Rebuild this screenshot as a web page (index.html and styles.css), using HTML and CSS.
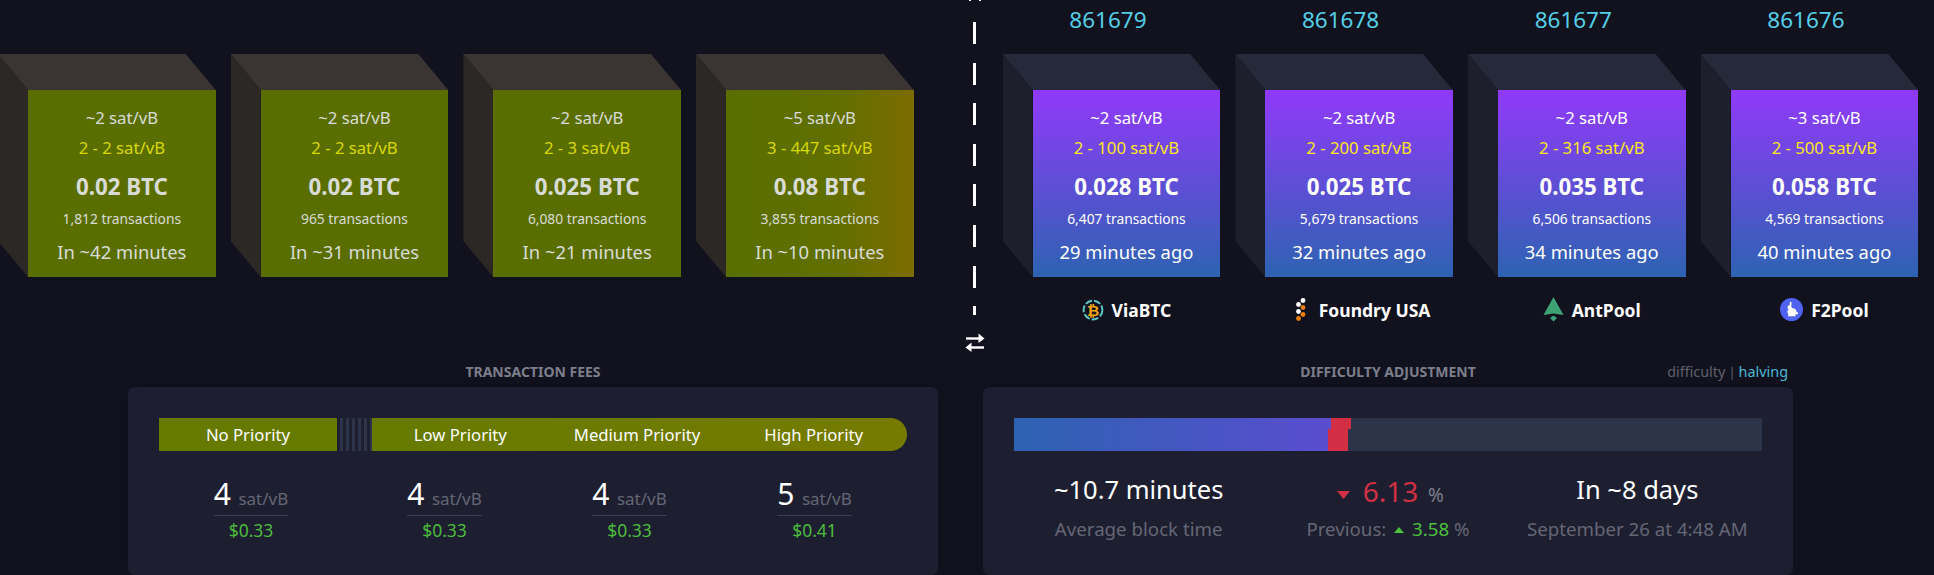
FILE: index.html
```html
<!DOCTYPE html>
<html lang="en">
<head>
  <meta charset="UTF-8" />
  <title>Mempool</title>
  <link rel="stylesheet" href="styles.css">
</head>
<body>
  <div class="chain">
    <div class="blocks">
      <div class="block pending">
        <div class="block-number"></div>
        <div class="face">
          <div class="median">~2 sat/vB</div>
          <div class="range">2 - 2 sat/vB</div>
          <div class="total">0.02 BTC</div>
          <div class="count">1,812 transactions</div>
          <div class="time">In ~42 minutes</div>
        </div>
      </div>
      <div class="block pending">
        <div class="block-number"></div>
        <div class="face">
          <div class="median">~2 sat/vB</div>
          <div class="range">2 - 2 sat/vB</div>
          <div class="total">0.02 BTC</div>
          <div class="count">965 transactions</div>
          <div class="time">In ~31 minutes</div>
        </div>
      </div>
      <div class="block pending">
        <div class="block-number"></div>
        <div class="face">
          <div class="median">~2 sat/vB</div>
          <div class="range">2 - 3 sat/vB</div>
          <div class="total">0.025 BTC</div>
          <div class="count">6,080 transactions</div>
          <div class="time">In ~21 minutes</div>
        </div>
      </div>
      <div class="block pending">
        <div class="block-number"></div>
        <div class="face face-next">
          <div class="median">~5 sat/vB</div>
          <div class="range">3 - 447 sat/vB</div>
          <div class="total">0.08 BTC</div>
          <div class="count">3,855 transactions</div>
          <div class="time">In ~10 minutes</div>
        </div>
      </div>
    </div>

    <div class="divider">
      <div class="divider-tip"></div>
      <div class="dashes"></div>
      <svg class="swap" width="20" height="19" viewBox="0 0 20 19">
        <path d="M1 5.5H16" stroke="#fff" stroke-width="2.4" fill="none"/>
        <path d="M13.5 0.5L19.5 5.5L13.5 10Z" fill="#fff"/>
        <path d="M19 14.5H4" stroke="#fff" stroke-width="2.4" fill="none"/>
        <path d="M6.5 9.5L0.5 14.5L6.5 19Z" fill="#fff"/>
      </svg>
    </div>

    <div class="blocks">
      <div class="block mined">
        <div class="block-number">861679</div>
        <div class="face">
          <div class="median">~2 sat/vB</div>
          <div class="range">2 - 100 sat/vB</div>
          <div class="total">0.028 BTC</div>
          <div class="count">6,407 transactions</div>
          <div class="time">29 minutes ago</div>
        </div>
        <div class="pool">
          <svg width="22" height="24" viewBox="0 0 22 24">
            <circle cx="11" cy="12" r="9.4" fill="none" stroke="#5cc4c4" stroke-width="2" stroke-dasharray="7 2"/>
            <text class="btc-glyph" x="11" y="17.5" text-anchor="middle">₿</text>
          </svg>
          <span>ViaBTC</span>
        </div>
      </div>
      <div class="block mined">
        <div class="block-number">861678</div>
        <div class="face">
          <div class="median">~2 sat/vB</div>
          <div class="range">2 - 200 sat/vB</div>
          <div class="total">0.025 BTC</div>
          <div class="count">5,679 transactions</div>
          <div class="time">32 minutes ago</div>
        </div>
        <div class="pool">
          <svg class="foundry-mark" width="16" height="24" viewBox="0 0 16 24">
            <circle cx="8" cy="2.5" r="2.4" fill="#fff"/>
            <circle cx="3.5" cy="6.5" r="2.4" fill="#fff"/>
            <circle cx="8" cy="9.5" r="2.4" fill="#f07c00"/>
            <circle cx="3.5" cy="13.5" r="2.4" fill="#fff"/>
            <circle cx="8" cy="16.5" r="2.4" fill="#f07c00"/>
            <circle cx="3.5" cy="20.5" r="2.4" fill="#f07c00"/>
          </svg>
          <span>Foundry USA</span>
        </div>
      </div>
      <div class="block mined">
        <div class="block-number">861677</div>
        <div class="face">
          <div class="median">~2 sat/vB</div>
          <div class="range">2 - 316 sat/vB</div>
          <div class="total">0.035 BTC</div>
          <div class="count">6,506 transactions</div>
          <div class="time">34 minutes ago</div>
        </div>
        <div class="pool">
          <svg width="21" height="25" viewBox="0 0 21 25">
            <path d="M10.5 0L20.5 18L10.5 16.5L0.5 18Z" fill="#3fa274"/>
            <path d="M10.5 18.5L14 21L10.5 24.5L7 21Z" fill="#3fa274"/>
          </svg>
          <span>AntPool</span>
        </div>
      </div>
      <div class="block mined">
        <div class="block-number">861676</div>
        <div class="face">
          <div class="median">~3 sat/vB</div>
          <div class="range">2 - 500 sat/vB</div>
          <div class="total">0.058 BTC</div>
          <div class="count">4,569 transactions</div>
          <div class="time">40 minutes ago</div>
        </div>
        <div class="pool">
          <svg width="23" height="23" viewBox="0 0 23 23">
            <circle cx="11.5" cy="11.5" r="11.5" fill="#4f63f0"/>
            <path d="M10 3.5L11.6 4.6L11.2 8L9.6 8Z" fill="#fff"/>
            <circle cx="9.6" cy="9.4" r="2.1" fill="#fff"/>
            <ellipse cx="12" cy="14" rx="4.6" ry="3.9" fill="#fff"/>
            <circle cx="16.8" cy="15.2" r="1.2" fill="#fff"/>
            <path d="M8 16.5H15.5V18.3H8Z" fill="#fff"/>
          </svg>
          <span>F2Pool</span>
        </div>
      </div>
    </div>
  </div>

  <div class="stats">
    <section>
      <div class="stats-head">
        <h5>TRANSACTION FEES</h5>
      </div>
      <div class="card">
        <div class="fee-bar">
          <div class="fee-none">No Priority</div>
          <div class="fee-stripes"></div>
          <div class="fee-levels">
            <div>Low Priority</div>
            <div>Medium Priority</div>
            <div>High Priority</div>
          </div>
        </div>
        <div class="fee-values">
          <div class="fee-item">
            <div class="fee-rate"><b>4</b> <span>sat/vB</span></div>
            <div class="fee-usd">$0.33</div>
          </div>
          <div class="fee-item">
            <div class="fee-rate"><b>4</b> <span>sat/vB</span></div>
            <div class="fee-usd">$0.33</div>
          </div>
          <div class="fee-item">
            <div class="fee-rate"><b>4</b> <span>sat/vB</span></div>
            <div class="fee-usd">$0.33</div>
          </div>
          <div class="fee-item">
            <div class="fee-rate"><b>5</b> <span>sat/vB</span></div>
            <div class="fee-usd">$0.41</div>
          </div>
        </div>
      </div>
    </section>

    <section>
      <div class="stats-head">
        <h5>DIFFICULTY ADJUSTMENT</h5>
        <div class="switch">difficulty<i>|</i><a>halving</a></div>
      </div>
      <div class="card">
        <div class="diff-bar">
          <div class="diff-fill"></div>
          <div class="diff-change"></div>
        </div>
        <div class="diff-values">
          <div class="diff-item">
            <div class="diff-main">~10.7 minutes</div>
            <div class="diff-sub">Average block time</div>
          </div>
          <div class="diff-item">
            <div class="diff-main diff-pct">
              <svg width="13" height="8" viewBox="0 0 13 8"><path d="M0 0H13L6.5 8Z" fill="#d22f45"/></svg>
              <em>6.13</em> <span>%</span>
            </div>
            <div class="diff-sub">Previous:
              <svg width="10" height="6" viewBox="0 0 10 6"><path d="M0 6H10L5 0Z" fill="#4cc13d"/></svg>
              <strong>3.58</strong> %
            </div>
          </div>
          <div class="diff-item">
            <div class="diff-main">In ~8 days</div>
            <div class="diff-sub">September 26 at 4:48 AM</div>
          </div>
        </div>
      </div>
    </section>
  </div>
</body>
</html>
```

FILE: styles.css
```css
html, body {
  margin: 0;
  height: 575px;
  overflow: hidden;
}
body {
  background: #11121e;
  color: #fff;
  font-family: "Noto Sans", sans-serif;
}

.chain {
  display: flex;
  height: 345px;
  padding-left: 28px;
}
.blocks {
  display: flex;
  gap: 45px;
}
.block {
  width: 187.67px;
  text-align: center;
}
.block-number {
  height: 90px;
  box-sizing: border-box;
  padding: 5px 37px 0 0;
  font-size: 22.5px;
  line-height: 30px;
  color: #55cfe6;
}
.face {
  position: relative;
  height: 187px;
  padding-top: 16px;
  box-sizing: border-box;
}
.face::before {
  content: "";
  position: absolute;
  left: -30px;
  right: 0;
  top: -36px;
  height: 36px;
  clip-path: polygon(0 0, calc(100% - 30px) 0, 100% 100%, 30px 100%);
}
.face::after {
  content: "";
  position: absolute;
  left: -30px;
  top: -36px;
  bottom: 0;
  width: 30px;
  clip-path: polygon(0 0, 100% 36px, 100% 100%, 0 calc(100% - 36px));
}
.pending .face {
  background: #5a6e00;
  color: #d9dcd6;
}
.pending .face-next {
  background: linear-gradient(to right, #5a6e00 0%, #5f6f00 55%, #7c6c00 100%);
}
.pending .face::before { background: #3a3533; }
.pending .face::after { background: #2b2826; }
.mined .face {
  background: linear-gradient(#9139fa, #2d63b2);
}
.mined .face::before { background: #262939; }
.mined .face::after { background: #1d1f2d; }

.median {
  font-size: 16.7px;
  line-height: 24px;
}
.range {
  font-size: 16.7px;
  line-height: 24px;
  margin-top: 5.5px;
  color: #d8d800;
}
.mined .range { color: #f8e71c; }
.total {
  font-size: 22.3px;
  line-height: 30px;
  font-weight: 700;
  margin-top: 12px;
}
.count {
  font-size: 13.8px;
  line-height: 20px;
  margin-top: 7px;
}
.time {
  font-size: 18.4px;
  line-height: 26px;
  margin-top: 10px;
}
.pool {
  display: flex;
  align-items: center;
  justify-content: center;
  gap: 8px;
  height: 25px;
  margin-top: 20px;
  font-size: 17.5px;
  font-weight: 700;
}
.foundry-mark {
  margin-left: 7px;
}

.divider {
  display: flex;
  flex-direction: column;
  align-items: center;
  width: 20px;
  margin: 0 48px 0 51px;
}
.divider-tip {
  flex: none;
  width: 8px;
  height: 1px;
  border-left: 2px solid #fff;
  border-right: 2px solid #fff;
}
.dashes {
  flex: none;
  width: 3px;
  height: 293px;
  margin-top: 21px;
  background: repeating-linear-gradient(#fff 0, #fff 22px, transparent 22px, transparent 40.6px);
}
.swap {
  margin-top: 18px;
  flex: none;
}
.btc-glyph {
  font-family: "DejaVu Sans", sans-serif;
  font-size: 15px;
  font-weight: 700;
  fill: #f5a60a;
}

.stats {
  display: grid;
  grid-template-columns: 810px 810px;
  gap: 45px;
  padding-left: 128px;
}
.stats-head {
  display: grid;
  grid-template-columns: 1fr auto 1fr;
  align-items: center;
  height: 42px;
  padding-top: 11px;
  box-sizing: border-box;
}
h5 {
  grid-column: 2;
  margin: 0;
  font-size: 14px;
  font-weight: 700;
  color: #7d7e8c;
}
.switch {
  justify-self: end;
  margin-right: 5px;
  font-size: 14.4px;
  color: #5f606e;
}
.switch i {
  font-style: normal;
  font-size: 13px;
  margin: 0 3px;
}
.switch a { color: #4ab8d6; }
.card {
  height: 188px;
  box-sizing: border-box;
  padding: 31px 31px 0;
  background: #1d1f31;
  border-radius: 7px;
  box-shadow: 0 0 12px rgba(0, 0, 0, 0.18);
}

.fee-bar {
  display: flex;
  height: 33px;
  font-size: 16.7px;
  line-height: 33px;
  text-align: center;
}
.fee-none {
  width: 178px;
  background: #667a00;
}
.fee-stripes {
  width: 35px;
  background: repeating-linear-gradient(90deg, transparent 0, transparent 3px, #2d3348 3px, #2d3348 6px);
}
.fee-levels {
  flex: 1;
  display: flex;
  padding-right: 5px;
  background: linear-gradient(to right, #667a00, #757b00);
  border-radius: 0 17px 17px 0;
}
.fee-levels div {
  flex: 1;
}
.fee-values {
  display: flex;
  margin-top: 26px;
}
.fee-item {
  width: 185px;
  text-align: center;
}
.fee-item:first-child {
  width: 184px;
  margin-right: 9px;
}
.fee-rate {
  display: inline-block;
  border-bottom: 1px solid #3b3d50;
  font-size: 17px;
  line-height: 33px;
  color: #656675;
}
.fee-rate b {
  font-size: 30px;
  font-weight: 400;
  color: #fff;
  margin-right: 3px;
}
.fee-usd {
  font-size: 17.5px;
  line-height: 28px;
  color: #4cbb3c;
}

.diff-bar {
  position: relative;
  height: 33px;
  background: #2d3348;
}
.diff-fill {
  width: 317px;
  height: 100%;
  background: linear-gradient(to right, #2d62b2, #5a4dcf);
}
.diff-change {
  position: absolute;
  left: 314px;
  top: 11px;
  bottom: 0;
  width: 20px;
  background: #d22f45;
}
.diff-change::before {
  content: "";
  position: absolute;
  left: 3px;
  top: -11px;
  width: 20px;
  height: 11px;
  background: #d22f45;
}
.diff-values {
  display: flex;
  margin-top: 17px;
}
.diff-item {
  flex: 1;
  text-align: center;
}
.diff-main {
  font-size: 25.5px;
  line-height: 42px;
}
.diff-sub {
  font-size: 18.7px;
  line-height: 30px;
  margin-top: 4px;
  color: #656675;
}
.diff-pct {
  height: 42px;
  box-sizing: border-box;
  padding: 3px 0 0 5px;
}
.diff-pct em {
  font-style: normal;
  font-size: 28px;
  line-height: 1;
  margin-left: 6px;
  color: #d22f45;
}
.diff-pct span {
  font-size: 19px;
  color: #7d7e8c;
  margin-left: 3px;
}
.diff-pct svg { vertical-align: 3px; }
.diff-sub svg { margin: 0 3px; vertical-align: 3px; }
.diff-sub strong {
  font-weight: 400;
  color: #4cc13d;
}
```
